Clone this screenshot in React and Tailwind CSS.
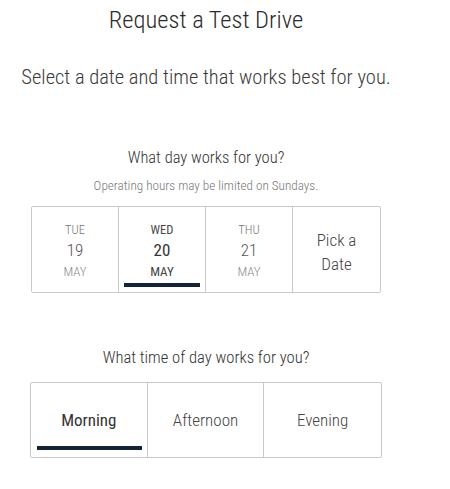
const days = [
  { dow: 'TUE', num: '19', mon: 'MAY' },
  { dow: 'WED', num: '20', mon: 'MAY', active: true },
  { dow: 'THU', num: '21', mon: 'MAY' },
];

const times = [
  { label: 'Morning', active: true },
  { label: 'Afternoon' },
  { label: 'Evening' },
];

export default function App() {
  return (
    <div className="w-[412px] flex flex-col items-center font-['Roboto_Condensed',_'Liberation_Sans',_sans-serif] font-light text-[#333] bg-white">
      {/* Heading */}
      <h1 className="mt-[5px] text-[24.5px] leading-[30px] text-[#2b2b2b]">Request a Test Drive</h1>
      <p className="mt-[28px] text-[20.5px] leading-[28px] text-[#3a3a3a]">
        Select a date and time that works best for you.
      </p>

      {/* Day */}
      <h2 className="mt-[55px] text-[16.5px] leading-[24px] text-[#333]">What day works for you?</h2>
      <p className="mt-[8px] text-[13.2px] leading-[16px] text-[#777]">Operating hours may be limited on Sundays.</p>

      <div className="mt-[12px] w-[350px] h-[87px] grid grid-cols-4 border border-[#c9c9c9] rounded-[2px] divide-x divide-[#c9c9c9]">
        {days.map((d) => (
          <button key={d.dow} className="relative flex flex-col items-center pt-[12px] cursor-pointer">
            <span className={`text-[12.5px] leading-[21px] ${d.active ? 'text-[#4a4a4a] font-normal' : 'text-[#777]'}`}>{d.dow}</span>
            <span className={`text-[17px] leading-[21px] ${d.active ? 'text-[#333] font-normal' : 'text-[#555]'}`}>{d.num}</span>
            <span className={`text-[13px] leading-[21px] ${d.active ? 'text-[#444] font-normal' : 'text-[#888]'}`}>{d.mon}</span>
            {d.active && <span className="absolute left-[5px] right-[5px] bottom-[5px] h-[4px] bg-[#13233a]" />}
          </button>
        ))}
        <button className="flex flex-col items-center justify-center pt-[4px] text-[17px] leading-[24px] text-[#444] cursor-pointer">
          <span>Pick a</span>
          <span>Date</span>
        </button>
      </div>

      {/* Time */}
      <h2 className="mt-[53px] text-[16.6px] leading-[24px] text-[#333]">What time of day works for you?</h2>

      <div className="mt-[12px] w-[352px] h-[76px] grid grid-cols-3 border border-[#c9c9c9] rounded-[2px] divide-x divide-[#c9c9c9]">
        {times.map((t) => (
          <button key={t.label} className="relative flex items-center justify-center cursor-pointer">
            <span className={`text-[17px] leading-[24px] ${t.active ? 'text-[#333] font-normal' : 'text-[#444]'}`}>{t.label}</span>
            {t.active && <span className="absolute left-[6px] right-[5px] bottom-[7px] h-[4px] bg-[#13233a]" />}
          </button>
        ))}
      </div>
    </div>
  );
}
